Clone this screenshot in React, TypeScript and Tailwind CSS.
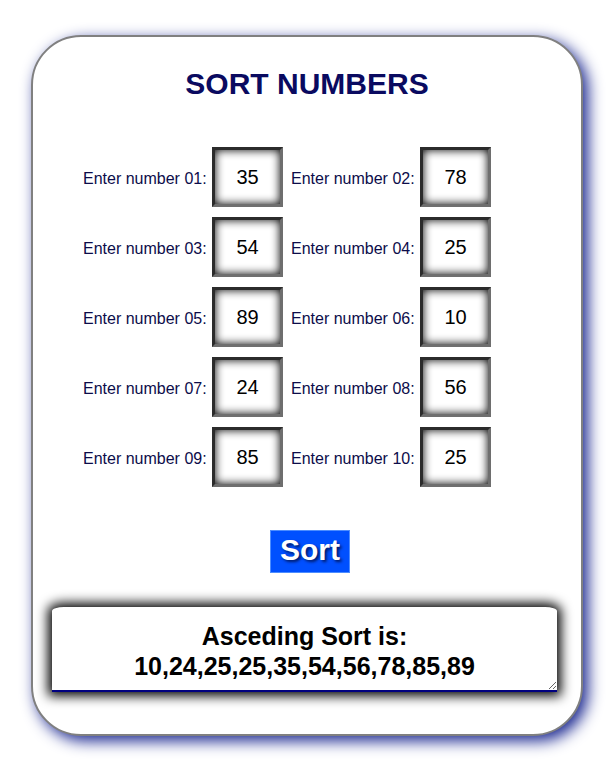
import { useState } from "react";

const INITIAL = ["35", "78", "54", "25", "89", "10", "24", "56", "85", "25"];

function NumberField({ label, value, onChange }: { label: string; value: string; onChange: (v: string) => void }) {
  return (
    <>
      <label className="w-[129px] pt-[3px] text-[16px] text-[#0c0c4a]">{label}</label>
      <input
        value={value}
        onChange={(e) => onChange(e.target.value)}
        className="w-[71px] h-[60px] bg-white text-center text-[20px] text-black outline-none border-[3px] border-t-[#2b2b2b] border-l-[#2b2b2b] border-r-[#6e6e6e] border-b-[#6e6e6e] shadow-[inset_0_0_10px_#000]"
      />
    </>
  );
}

export default function App() {
  const [values, setValues] = useState<string[]>(INITIAL);
  const sortNums = (vals: string[]) =>
    vals.map(Number).sort((a, b) => a - b).join(",");
  const [result, setResult] = useState(sortNums(INITIAL));

  function setAt(i: number, v: string) {
    setValues(prev => prev.map((x, j) => (j === i ? v : x)));
  }

  const rows = [0, 1, 2, 3, 4];

  return (
    <div className="min-h-[761px] bg-white pt-[35px] pl-[31px] font-['Liberation_Sans',Arial,sans-serif]">
      <div className="w-[552px] h-[701px] bg-white border-2 border-[#808080] rounded-[50px] shadow-[5px_5px_15px_#1a2790] flex flex-col">
        <h1 className="pt-[30px] text-center text-[30px] leading-[34px] font-bold text-[#0a0a60]">SORT NUMBERS</h1>

        <div className="mt-[46px] pl-[50px] flex flex-col gap-[10px]">
          {rows.map(r => {
            const a = r * 2;
            const b = r * 2 + 1;
            return (
              <div key={r} className="flex items-center">
                <NumberField label={`Enter number ${String(a + 1).padStart(2, "0")}:`} value={values[a]} onChange={(v) => setAt(a, v)} />
                <div className="w-[8px]" />
                <NumberField label={`Enter number ${String(b + 1).padStart(2, "0")}:`} value={values[b]} onChange={(v) => setAt(b, v)} />
              </div>
            );
          })}
        </div>

        <div className="mt-[43px] flex justify-center pl-[6px]">
          <button
            onClick={() => setResult(sortNums(values))}
            className="h-[43px] px-[9px] pb-[3px] bg-[#0050ff] border border-[#4d8dff] text-white text-[30px] font-bold leading-none [text-shadow:2px_2px_3px_#001a66]"
          >
            Sort
          </button>
        </div>

        <textarea
          readOnly
          value={`Asceding Sort is:\n${result}`}
          className="mt-[34px] ml-[19px] w-[505px] h-[85px] pt-[14px] bg-white text-center text-[25px] leading-[30px] font-bold text-black outline-none border-0 border-b-2 border-b-[#000080] rounded-tl-[12px_4px] rounded-tr-[12px_4px] shadow-[0_0_12px_4px_#000] overflow-hidden"
        />
      </div>
    </div>
  );
}
